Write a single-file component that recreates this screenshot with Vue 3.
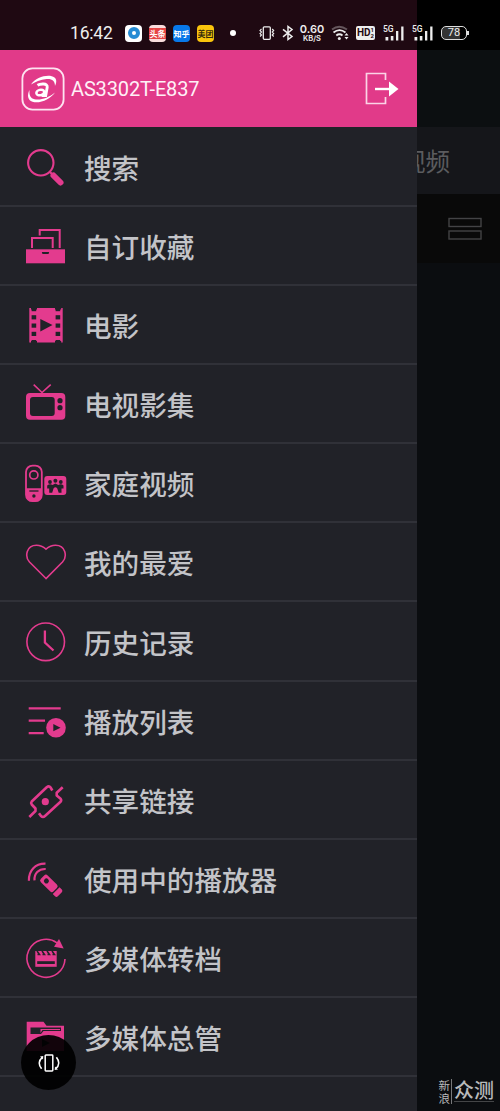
<script setup>
const rows = [
  { id: 'search', label: '搜索' },
  { id: 'collection', label: '自订收藏' },
  { id: 'movie', label: '电影' },
  { id: 'tv', label: '电视影集' },
  { id: 'home', label: '家庭视频' },
  { id: 'heart', label: '我的最爱' },
  { id: 'history', label: '历史记录' },
  { id: 'playlist', label: '播放列表' },
  { id: 'share', label: '共享链接' },
  { id: 'player', label: '使用中的播放器' },
  { id: 'convert', label: '多媒体转档' },
  { id: 'manager', label: '多媒体总管' },
]
const holes = [4, 12.2, 20.5, 28.8, 37]
</script>

<template>
  <div class="screen">
    <!-- page behind the drawer -->
    <div class="page">
      <div class="page-status"></div>
      <div class="page-header"></div>
      <div class="page-tabs"><span>家庭视频</span></div>
      <div class="page-tools">
        <svg width="34" height="23" viewBox="0 0 34 23" fill="none" stroke="#434345" stroke-width="1.4">
          <rect x="1" y="1.500" width="32" height="8" /><rect x="1" y="14" width="32" height="8" />
        </svg>
      </div>
      <div class="page-body">
        <div class="mark">
          <div class="mark-small"><span>新</span><span>浪</span></div>
          <div class="mark-big">众测</div>
        </div>
      </div>
    </div>

    <aside class="drawer">
      <div class="drawer-status"></div>
      <header class="drawer-header">
        <svg class="logo" width="44" height="44" viewBox="0 0 44 44">
          <rect x="1.400" y="1.400" width="41.200" height="41.200" rx="10" fill="none" stroke="#fde4f1" stroke-width="1.800" />
          <path d="M10 17.500C15 10 28 6.500 33.500 10.500C36 12.500 35.500 16 34 19C34 14 31 11.500 25.500 12C19.500 12.500 14 15 10 17.500Z" fill="#fff" />
          <path d="M8.500 23C6 28 6.500 33 11.500 34.800C19 37 29.500 32 34 25.500C28 30.500 20 33.500 13.500 32.300C9.500 31.500 8 28 8.500 23Z" fill="#fff" />
          <path d="M16.500 18.300C19 16.700 27 15.800 26.200 20.200L24.700 28.500H20.500" fill="none" stroke="#fff" stroke-width="2.900" />
          <ellipse cx="19.300" cy="25.500" rx="4" ry="2.700" transform="rotate(-14 19.300 25.500)" fill="none" stroke="#fff" stroke-width="2.500" />
        </svg>
        <span class="device">AS3302T-E837</span>
        <svg class="exit" width="34" height="33" viewBox="0 0 34 33">
          <path d="M20.500 8V1.500H1.500V31.500H20.500V25" fill="none" stroke="#fbd3e6" stroke-width="1.700" />
          <path d="M10 17H25" stroke="#fff" stroke-width="2.400" /><path d="M24 9.500L33.500 17L24 24.500Z" fill="#fff" />
        </svg>
      </header>

      <nav class="menu">
        <div v-for="row in rows" :key="row.id" class="row">
          <svg class="icon" width="44" height="44" viewBox="0 0 44 44">
            <g v-if="row.id === 'search'" class="line">
              <circle cx="17.800" cy="17.800" r="12.700" stroke-width="2.100" />
              <path d="M26.700 26.700L30 30" stroke-width="2.200" />
              <path d="M30.500 30.500L37.500 37.500" stroke-width="6" stroke-linecap="round" />
            </g>
            <g v-else-if="row.id === 'collection'">
              <path class="line" d="M16.700 11.500V6H36.700V24M9 24V14H29.700V24" stroke-width="2" />
              <rect class="fill" x="3" y="25.300" width="39" height="14" />
              <path class="dark" d="M18.800 28H26.200L25.500 30H19.500Z" />
            </g>
            <g v-else-if="row.id === 'movie'">
              <path class="fill" d="M6.300 5.100H8V6.500H14V5.100H32V6.500H38.200V5.100H39.700V39.500H38.200V38H32V39.500H14V38H8V39.500H6.300Z" />
              <template v-for="y in holes" :key="y">
                <rect class="dark" x="8.600" :y="y" width="4.600" height="4.200" />
                <rect class="dark" x="32.600" :y="y" width="4.600" height="4.200" />
              </template>
              <path class="dark" d="M17.300 15.900L29.500 22.100L17.300 28.500Z" />
            </g>
            <g v-else-if="row.id === 'tv'">
              <path class="line" d="M10.700 2.700L19 10.500L27.700 2.700" stroke-width="1.600" />
              <rect class="fill" x="3" y="11" width="39.300" height="26.700" rx="4" />
              <rect class="dark" x="7" y="15" width="24.700" height="19" rx="3" />
              <circle class="dark" cx="37" cy="18.700" r="2.600" /><circle class="dark" cx="37" cy="25.700" r="2.600" />
            </g>
            <g v-else-if="row.id === 'home'">
              <rect class="line" x="3" y="4.600" width="15.800" height="35.600" rx="6.500" stroke-width="1.800" />
              <path class="fill" d="M3 27.300H18.800V33.500Q18.800 40.500 11 40.500Q3 40.500 3 33.500Z" />
              <circle class="line" cx="10.800" cy="13.900" r="4.100" stroke-width="1.700" />
              <path d="M6.300 30H15.500" stroke="#212228" stroke-width="1.300" />
              <circle class="dark" cx="10.900" cy="35" r="1.700" />
              <rect class="fill" x="21.300" y="15.100" width="22" height="19" rx="3" />
              <g class="dark">
                <circle cx="27" cy="21" r="1.900" /><circle cx="32.400" cy="19.700" r="2" /><circle cx="37.800" cy="21" r="1.900" />
                <path d="M24.200 24.500Q27 22.500 29.500 24L32.400 22.500L35.300 24Q38 22.500 40.500 24.500V27.500H38.500V31.800H35.700L34.300 27.500Q32.400 25 30.500 27.500L29.200 31.800H26.200V27.500H24.200Z" />
              </g>
            </g>
            <path v-else-if="row.id === 'heart'" class="line" d="M23 38.500L6.500 22C1.500 16.500 3.300 5.300 13.500 5.300C17.500 5.300 20 6.500 23 9.200C26 6.500 28.500 5.300 32.500 5.300C42.700 5.300 44.500 16.500 39.500 22Z" stroke-width="1.600" />
            <g v-else-if="row.id === 'history'" class="line">
              <circle cx="22.700" cy="21.800" r="18.800" stroke-width="1.600" />
              <path d="M21.900 10.500V22.500L30.500 30.500" stroke-width="2.300" />
            </g>
            <g v-else-if="row.id === 'playlist'">
              <path class="line" d="M5.700 9.400H37.700M5.700 21.700H22M5.700 34.100H20.700" stroke-width="2.200" />
              <circle class="fill" cx="33" cy="28.700" r="9.800" />
              <path class="dark" d="M30.300 25L37.500 28.700L30.300 32.300Z" />
            </g>
            <g v-else-if="row.id === 'share'">
              <g class="line" stroke-width="2.600" stroke-linejoin="round">
                <path d="M29.300 12.500L27.700 9.600Q26 7.500 23.700 9.300L8.700 23.500Q7.500 25 8.700 26.500L12.500 30.500V33L6.300 39" />
                <path d="M16 35.300L18 38Q20 39.800 22 38L37.500 23.800Q38.800 22.300 37.600 20.800L33.700 17.500V14.800L39.700 9.200" />
              </g>
              <circle class="fill" cx="22.300" cy="23.700" r="3.600" />
            </g>
            <g v-else-if="row.id === 'player'">
              <path class="line" d="M5.900 23.800C5.500 13.500 12.500 6.300 22.500 6.700M11.500 23.300C11 16.500 15.500 11.700 22.700 12" stroke-width="2.200" />
              <g transform="rotate(45 28 28.500)">
                <rect class="fill" x="16" y="23.700" width="18" height="9.600" rx="2.500" />
                <path class="fill" d="M35.300 23.700H38.500Q40.500 23.700 40.500 26V31Q40.500 33.300 38.500 33.300H35.300Z" />
                <circle class="dark" cx="21.500" cy="28.500" r="2.500" />
              </g>
            </g>
            <g v-else-if="row.id === 'convert'">
              <path class="line" d="M42 23A19 19 0 1 1 34 6.800" stroke-width="1.600" />
              <path class="fill" d="M36 3L40.700 12.500L31 10.800Z" />
              <rect class="fill" x="12.300" y="15" width="21.400" height="15.800" />
              <rect class="dark" x="14.200" y="25.200" width="17.600" height="2.800" />
              <path d="M14 15L16.500 18.500H14.500M19 15L21.500 18.500H19.500M24 15L26.500 18.500H24.500M29 15L31.500 18.500H29.500" fill="none" stroke="#212228" stroke-width="1.500" />
            </g>
            <g v-else>
              <path class="fill" d="M3.700 6.700H20.500L23.500 10.700H41V36H3.700Z" />
              <path class="dark" d="M7.500 12.500H38V16H20.500L18 19H7.500Z" />
              <path class="fill" d="M17.500 14H37V15H19.500L17.500 18Z" />
              <path class="dark" d="M19 24L27 28L19 32Z" />
            </g>
          </svg>
          <span class="label">{{ row.label }}</span>
        </div>
      </nav>
    </aside>

    <div class="status">
      <span class="time">16:42</span>
      <div class="apps">
        <span class="app browser"><i></i></span>
        <span class="app news">头条</span>
        <span class="app zhihu">知乎</span>
        <span class="app food">美团</span>
      </div>
      <span class="dot"></span>
      <svg class="vibrate" width="16" height="16" viewBox="0 0 16 16" fill="none" stroke="#eee" stroke-width="1.300">
        <rect x="4.300" y="1.800" width="7" height="12.500" rx="1" /><path d="M2.500 4L1 5.500L2.500 7L1 8.500L2.500 10L1 11.500M13.200 4L14.700 5.500L13.200 7L14.700 8.500L13.200 10L14.700 11.500" stroke-width="1.100" />
      </svg>
      <svg class="bt" width="12" height="16" viewBox="0 0 12 16" fill="none" stroke="#eee" stroke-width="1.500">
        <path d="M1 4.300L10 11.500L6 14.500V1.500L10 4.500L1 11.800" />
      </svg>
      <div class="speed"><b>0.60</b><small>KB/S</small></div>
      <svg class="wifi" width="19" height="16" viewBox="0 0 19 16" fill="none" stroke="#eee" stroke-width="1.800">
        <path d="M1 4.500Q8 -1 16 4.500" stroke="#65565c" /><path d="M2.500 7.500Q8.500 2.800 14.500 7.500M5.300 10.500Q8.500 8 11.500 10.500" />
        <circle cx="8.300" cy="13.500" r="1.500" fill="#eee" stroke="none" /><path d="M13.500 10.500L15.500 8L17.500 10.500ZM13.500 12L15.500 14.500L17.500 12Z" fill="#eee" stroke="none" />
      </svg>
      <div class="hd"><span>HD</span><small><i>1</i><i>2</i></small></div>
      <div v-for="n in 2" :key="n" class="signal">
        <span>5G</span>
        <svg width="21" height="16" viewBox="0 0 21 16" fill="#eee"><path d="M2.500 12H5.300V15.500H2.500ZM7.800 11H10.400V15.500H7.800ZM13 6H15.300V15.500H13ZM18.200 1.500H20.500V15.500H18.200Z" /></svg>
      </div>
      <div class="battery"><span>78</span></div>
    </div>

    <div class="fab">
      <svg width="22" height="18" viewBox="0 0 22 18" fill="none" stroke="#fff" stroke-width="1.500">
        <rect x="7.200" y="1" width="7.600" height="16" rx=".7" />
        <path d="M4.300 3.300C.5 6.500 .5 11 3.600 14.800M17.700 14.700C21.500 11.500 21.500 7 18.400 3.200" stroke-width="1.700" />
        <path d="M2 2.600L5.300 2L5 5.600ZM20 15.400L16.700 16L17 12.400Z" fill="#fff" stroke="none" />
      </svg>
    </div>
  </div>
</template>

<style>
body { background: #000; }
</style>

<style scoped>
.screen {
  position: relative;
  width: 500px;
  height: 1111px;
  overflow: hidden;
  background: #0b0d10;
  font-family: "Noto Sans CJK SC", sans-serif;
}
.page { display: flex; flex-direction: column; height: 100%; }
.page-status { height: 50px; background: #000; }
.page-header { height: 77px; background: #0c0f11; }
.page-tabs {
  display: flex; align-items: center; justify-content: flex-end;
  height: 67px; padding-right: 50px; box-sizing: border-box;
  background: #15161a; color: #5b5c5f; font-size: 24.500px;
}
.page-tools {
  display: flex; align-items: center; justify-content: flex-end;
  height: 69px; padding-right: 18px; box-sizing: border-box; background: #090909;
}
.page-body { flex: 1; display: flex; align-items: flex-end; justify-content: flex-end; padding: 0 6px 7px 0; }
.mark { display: flex; color: #b9babb; align-items: center; }
.mark-small {
  display: flex; flex-direction: column; font-size: 11.500px; line-height: 12.500px;
  padding-right: 1px; border-right: 1px solid #77787a;
}
.mark-big { font-size: 20px; font-weight: 500; line-height: 22px; margin: 0 0 2px 2px; border-bottom: 1px solid #444547; }

.drawer {
  position: absolute; top: 0; left: 0; width: 417px; height: 1111px;
  display: flex; flex-direction: column; background: #212228;
}
.drawer-status { height: 50px; background: #1f0912; }
.drawer-header {
  display: flex; align-items: center; height: 77px; box-sizing: border-box;
  padding: 0 18.500px 0 20.500px; background: #e13a89;
}
.logo, .exit { flex: none; }
.device {
  flex: 1; margin-left: 6.500px; font-family: Roboto, sans-serif; font-size: 20px;
  letter-spacing: -.15px; color: #fff0f7; line-height: 24px; padding-top: 1px;
}
.menu { display: flex; flex-direction: column; padding-top: .600px; }
.row {
  display: flex; align-items: center; height: 79.150px; box-sizing: border-box;
  padding-left: 23px; border-bottom: 2px solid #303138;
}
.icon { flex: none; display: block; margin-top: 1px; }
.label { margin-left: 17px; font-size: 27.600px; font-weight: 500; line-height: 40px; color: #c3c4c8; margin-top: 1px; white-space: nowrap; }
.line, .line * { fill: none; stroke: #e33b8e; }
.fill { fill: #e33b8e; }
.dark, .dark * { fill: #212228; }

.status {
  position: absolute; top: 23px; left: 0; width: 500px; height: 20px;
  display: flex; align-items: center; box-sizing: border-box; padding-left: 70px;
  color: #eee; font-family: Roboto, sans-serif;
}
.time { width: 42px; font-size: 17.500px; line-height: 20px; letter-spacing: -.2px; white-space: nowrap; }
.apps { display: flex; gap: 7px; margin-left: 13px; }
.app {
  display: flex; align-items: center; justify-content: center; width: 17px; height: 17px;
  border-radius: 4px; font: 700 8px/9px "Noto Sans CJK SC", sans-serif; color: #fff; overflow: hidden; white-space: nowrap;
}
.browser { background: #fff; }
.browser i { width: 4px; height: 4px; border: 4px solid #258bd4; border-radius: 50%; background: #fff; }
.news { background: linear-gradient(#f9dddd 3px, #e64545 3px, #e64545 14px, #f9dddd 14px); }
.zhihu { background: #0878e9; }
.food { background: #fac50c; color: #332b0d; }
.dot { width: 6px; height: 6px; border-radius: 50%; background: #fff; margin-left: 16px; }
.vibrate { margin-left: 23px; }
.bt { margin-left: 7px; }
.speed { display: flex; flex-direction: column; align-items: center; width: 26px; margin-left: 5px; }
.speed b { font: 600 11px/11px Inter, sans-serif; }
.speed small { font: 600 7.500px/8px Inter, sans-serif; }
.wifi { margin-left: 6px; }
.hd {
  display: flex; align-items: center; justify-content: center; width: 19px; height: 14px; margin-left: 6px;
  border-radius: 2px; background: #eee; color: #1f0912; font: 700 10px/14px Roboto, sans-serif;
}
.hd small { display: flex; flex-direction: column; font-size: 6px; line-height: 6px; }
.hd i { font-style: normal; }
.signal { position: relative; width: 21px; height: 16px; margin-left: 8px; }
.signal svg { display: block; }
.signal span { position: absolute; left: 0; top: 0; font: 500 8.500px/8px Roboto, sans-serif; }
.battery {
  position: relative; width: 26px; height: 14px; box-sizing: border-box; margin-left: 8px;
  border: 1.500px solid #ddd; border-radius: 5px; display: flex; align-items: center; justify-content: center;
  font-size: 11px; line-height: 12px; background: linear-gradient(90deg, #343434 76%, #000 76%);
}
.battery::after { content: ""; position: absolute; right: -3px; top: 3.500px; width: 2px; height: 4px; background: #ddd; }
.fab {
  position: absolute; left: 21px; top: 1035px; width: 55px; height: 55px; border-radius: 50%;
  display: flex; align-items: center; justify-content: center; background: rgba(0, 0, 0, .92);
}
</style>
